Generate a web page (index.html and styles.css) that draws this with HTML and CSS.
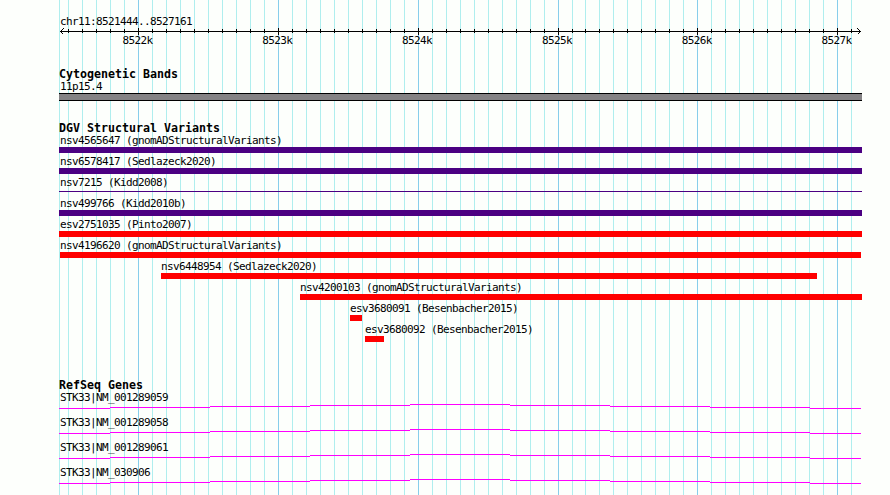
FILE: index.html
```
<!DOCTYPE html>
<html lang="en">
<head>
  <meta charset="UTF-8">
  <title>chr11:8521444..8527161</title>
  <link rel="stylesheet" href="styles.css">
</head>
<body>
  <div class="browser">
    <svg class="grid" id="grid" width="890" height="495" shape-rendering="crispEdges"></svg>

    <!-- SCALE -->
    <section class="scale">
      <p class="label">chr11:8521444..8527161</p>
      <svg class="ruler" id="ruler" width="803" height="7" shape-rendering="crispEdges"></svg>
      <div class="ticks">
        <span>8522k</span><span>8523k</span><span>8524k</span><span>8525k</span><span>8526k</span><span>8527k</span>
      </div>
    </section>

    <!-- CYTOGENETIC BANDS -->
    <section class="cytobands">
      <h2>Cytogenetic Bands</h2>
      <p class="label">11p15.4</p>
      <div class="band"></div>
    </section>

    <!-- VARIANTS -->
    <section class="variants">
      <h2>DGV Structural Variants</h2>
      <div id="variants"></div>
    </section>

    <!-- GENES -->
    <section class="genes">
      <h2>RefSeq Genes</h2>
      <div id="genes"></div>
    </section>
  </div>

  <script>
    const variants = [
      { name: "nsv4565647 (gnomADStructuralVariants)", start: 0, width: 803, type: "complex" },
      { name: "nsv6578417 (Sedlazeck2020)", start: 0, width: 803, type: "complex" },
      { name: "nsv7215 (Kidd2008)", start: 0, width: 803, type: "complex thin" },
      { name: "nsv499766 (Kidd2010b)", start: 0, width: 803, type: "complex" },
      { name: "esv2751035 (Pinto2007)", start: 0, width: 803, type: "loss" },
      { name: "nsv4196620 (gnomADStructuralVariants)", start: 1, width: 801, type: "loss" },
      { name: "nsv6448954 (Sedlazeck2020)", start: 102, width: 656, type: "loss" },
      { name: "nsv4200103 (gnomADStructuralVariants)", start: 241, width: 562, type: "loss" },
      { name: "esv3680091 (Besenbacher2015)", start: 291, width: 12, type: "loss" },
      { name: "esv3680092 (Besenbacher2015)", start: 306, width: 19, type: "loss" }
    ];
    const genes = ["STK33|NM_001289059", "STK33|NM_001289058", "STK33|NM_001289061", "STK33|NM_030906"];

    // one line every 100 bp, a darker one every 1 kb
    let grid = '<rect class="minor" x="59" y="0" width="1" height="495"/>';
    let ruler = '<rect x="1" y="3" width="801" height="1"/><path d="M4.5 0.5L1.5 3.5L4.5 6.5M798.5 0.5L801.5 3.5L798.5 6.5"/>';
    for (let i = 0; i <= 56; i++) {
      const x = 68 + i * 14 - (i > 36 ? 1 : 0);
      const major = i % 10 === 5;
      grid += `<rect class="${major ? "major" : "minor"}" x="${x}" y="0" width="1" height="495"/>`;
      ruler += `<rect x="${x - 59}" y="${major ? 0 : 1}" width="1" height="${major ? 7 : 4}"/>`;
    }
    document.getElementById("grid").innerHTML = grid;
    document.getElementById("ruler").innerHTML = ruler;

    document.getElementById("variants").innerHTML = variants.map(v => `
      <div class="variant ${v.start > 0 ? "inset" : ""}" style="margin-left: ${v.start}px">
        <p class="label">${v.name}</p>
        <div class="bar ${v.type}" style="width: ${v.width}px"></div>
      </div>`).join("");

    // the intron line rises to the middle of the gene and falls again
    const steps = [[0, 51, 4], [51, 100, 3], [151, 100, 2], [251, 100, 1], [351, 100, 0], [451, 100, 1], [551, 100, 2], [651, 100, 3], [751, 51, 4]];
    const intron = steps.map(s => `<rect x="${s[0]}" y="${s[2]}" width="${s[1]}" height="1"/>`).join("");
    document.getElementById("genes").innerHTML = genes.map(g => `
      <div class="gene">
        <p class="label">${g}</p>
        <svg class="intron" width="803" height="5" shape-rendering="crispEdges">${intron}</svg>
      </div>`).join("");
  </script>
</body>
</html>
```
FILE: styles.css
```
*, *::before, *::after {
  box-sizing: border-box;
  margin: 0;
  padding: 0;
}

body {
  background: #fdfffc;
  color: #000;
  font-family: "DejaVu Sans Mono", monospace;
  overflow: hidden;
}

.browser {
  position: relative;
  width: 890px;
  height: 495px;
  padding: 15px 28px 0 59px;
}

/* GRID BEHIND THE TRACKS */
.grid {
  position: absolute;
  top: 0;
  left: 0;
  z-index: -1;
}

.minor {
  fill: #afeeee;
}

.major {
  fill: #87ceeb;
}

svg {
  display: block;
}

h2 {
  height: 12px;
  font-size: 11.63px;
  line-height: 12px;
  white-space: pre;
}

.label {
  height: 13px;
  padding-left: 1px;
  font-size: 11px;
  letter-spacing: -0.62px;
  line-height: 13px;
  white-space: nowrap;
}

/* SCALE */
.scale {
  height: 53px;
}

.ruler path {
  fill: none;
  stroke: #000;
}

.ticks {
  display: grid;
  grid-template-columns: repeat(5, 139.8px) auto;
  padding-left: 63.5px;
  font-size: 11px;
  letter-spacing: -0.62px;
  line-height: 11px;
}

/* CYTOGENETIC BANDS */
.cytobands {
  height: 54px;
}

.band {
  width: 803px;
  height: 8px;
  background: #848284;
  border-top: 1px solid #000;
  border-bottom: 1px solid #000;
}

/* VARIANTS */
.variants {
  height: 257px;
}

.variant {
  height: 21px;
}

.inset .label {
  padding-left: 0;
}

.bar {
  height: 6px;
}

.complex {
  background: #4b0082;
}

.thin {
  height: 1px;
  margin-top: 2px;
}

.loss {
  background: #f00;
}

/* GENES */
.gene {
  height: 25px;
}

.intron {
  fill: #f0f;
}
```
